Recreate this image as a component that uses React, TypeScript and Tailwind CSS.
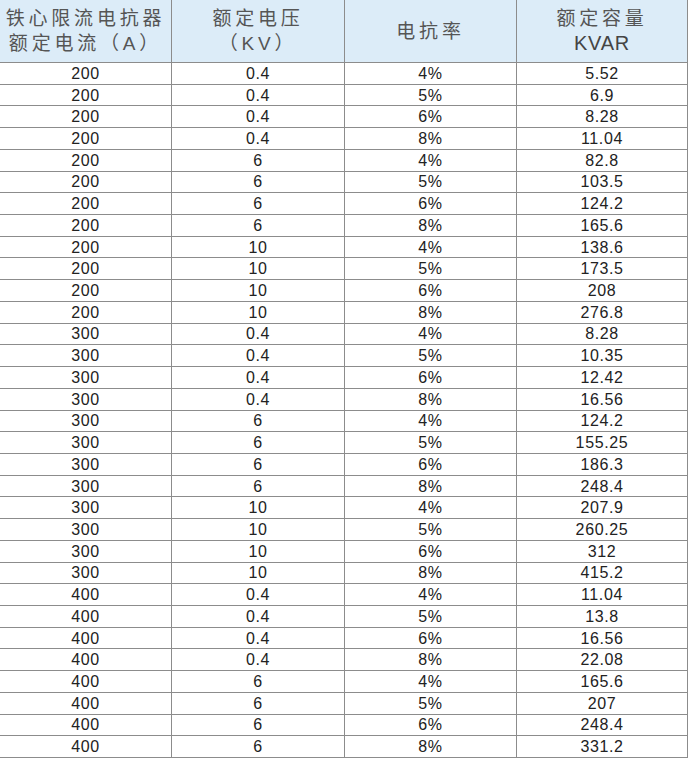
const voltages = ["0.4", "6", "10"];
const rates = ["4%", "5%", "6%", "8%"];

const kvar: Record<string, string[]> = {
  "200": ["5.52", "6.9", "8.28", "11.04", "82.8", "103.5", "124.2", "165.6", "138.6", "173.5", "208", "276.8"],
  "300": ["8.28", "10.35", "12.42", "16.56", "124.2", "155.25", "186.3", "248.4", "207.9", "260.25", "312", "415.2"],
  "400": ["11.04", "13.8", "16.56", "22.08", "165.6", "207", "248.4", "331.2"],
};

const rows: string[][] = [];
for (const current of ["200", "300", "400"]) {
  kvar[current].forEach((cap, i) => {
    rows.push([current, voltages[Math.floor(i / 4)], rates[i % 4], cap]);
  });
}

const headCell = "flex flex-col items-center justify-center border-r border-b border-[#8c8c8c] bg-[#dcecf8] text-[#555] text-[19px] leading-[25px] tracking-[0.2em]";
const bodyCell = "flex items-center justify-center border-r border-b border-[#8c8c8c] text-[16px] leading-none text-[#222] pt-[1px]";

export default function App() {
  return (
    <div className="w-[690px] h-[758px] bg-white overflow-hidden" style={{ fontFamily: '"Liberation Sans", Arial, "Noto Sans CJK SC", sans-serif' }}>
      <div className="grid grid-cols-[172px_173px_172px_171px] grid-rows-[63px_repeat(32,minmax(0,1fr))] w-[688px] h-[758px]">
        {/* header */}
        <div className={headCell}>
          <span>铁心限流电抗器</span>
          <span>额定电流（A）</span>
        </div>
        <div className={headCell}>
          <span>额定电压</span>
          <span>（KV）</span>
        </div>
        <div className={headCell}>
          <span>电抗率</span>
        </div>
        <div className={headCell}>
          <span>额定容量</span>
          <span className="text-[20px] tracking-[0.04em] text-[#444]">KVAR</span>
        </div>

        {/* data rows */}
        {rows.map((r, i) =>
          r.map((v, j) => (
            <div key={`${i}-${j}`} className={bodyCell}>
              <span className="tracking-[0.04em]">{v}</span>
            </div>
          ))
        )}
      </div>
    </div>
  );
}
